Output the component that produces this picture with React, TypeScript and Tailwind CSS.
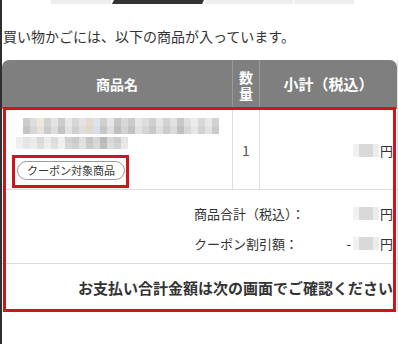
import React from "react";

const font = "font-['Noto_Sans_CJK_JP','Noto_Sans',sans-serif]";

// pixelated (mosaic) placeholder for hidden text
const Mosaic = ({ rows, h }: { rows: string[][]; h: string }) => (
  <div className="flex flex-col">
    {rows.map((row, i) => (
      <div key={i} className="flex">
        {row.map((c, j) => (
          <div key={j} className={`w-[7px] ${h}`} style={{ background: c }} />
        ))}
      </div>
    ))}
  </div>
);

const line1: string[][] = [
  ["#cdcdcd", "#dedede", "#eee7dc", "#d2d2d2", "#e3e3e3", "#cccccc", "#e8e8e8", "#d6d6d6", "#e3e3e3", "#e4d9cc", "#dde4ec", "#d0d0d0", "#e6e6e6", "#c6c6c6", "#d8d8d8", "#cacaca", "#e7e7e7", "#dcdcdc", "#d0d0d0", "#e6e6e6", "#d3d3d3", "#e2e2e2", "#c8c8c8", "#dfdfdf", "#ececec", "#d9d9d9", "#e8e8e8", "#d2d2d2"],
  ["#c4c4c4", "#d7d7d7", "#e9e2d8", "#cbcbcb", "#dddddd", "#c3c3c3", "#e2e2e2", "#cfcfcf", "#dedede", "#e1d7ca", "#d8dfe8", "#c7c7c7", "#dfdfdf", "#bfbfbf", "#d2d2d2", "#c2c2c2", "#e1e1e1", "#d5d5d5", "#c8c8c8", "#dfdfdf", "#cccccc", "#dbdbdb", "#c0c0c0", "#d8d8d8", "#e6e6e6", "#d2d2d2", "#e2e2e2", "#cbcbcb"],
];

const line2: string[][] = [
  ["#eeeeee", "#e4e4e4", "#eaeaea", "#dadada", "#ebebeb", "#dcdcdc", "#eeeeee", "#d2d2d2", "#cbcbcb", "#dedede", "#c6c6c6", "#d6d6d6", "#b9b9b9", "#d9d9d9", "#cdcdcd", "#e5e5e5"],
  ["#f1f1f1", "#e7e7e7", "#ededed", "#dedede", "#eeeeee", "#e0e0e0", "#f0f0f0", "#d7d7d7", "#d0d0d0", "#e2e2e2", "#cbcbcb", "#dadada", "#bfbfbf", "#dddddd", "#d3d3d3", "#e9e9e9"],
];

const Price = ({ minus }: { minus?: boolean }) => (
  <div className="flex items-center justify-end">
    {minus && <span className="mr-[2px] text-[13px]">-</span>}
    <div className="flex h-[13px]">
      <div className="w-[6px] bg-[#f1f1f1]" />
      <div className="w-[14px] bg-[#d9d9d9]" />
      <div className="w-[6px] bg-[#ececec]" />
    </div>
    <span className="ml-[1px] text-[13px] leading-none">円</span>
  </div>
);

export default function App() {
  return (
    <div className={`relative w-[398px] h-[344px] overflow-hidden bg-white border-l-2 border-[#2f2f2f] text-[#333] ${font}`}>
      {/* steps bar */}
      <div className="flex h-[4px] ml-[49px] gap-[1px]">
        <div className="w-[60px] bg-[#eeeeee]" />
        <div className="w-[92px] bg-[#333333] [clip-path:polygon(2px_0,100%_0,calc(100%-2px)_100%,0_100%)]" />
        <div className="w-[88px] bg-[#eeeeee]" />
        <div className="w-[60px] bg-[#eeeeee]" />
      </div>

      <p className="mt-[21px] ml-[1px] text-[14px] leading-[22px]">
        買い物かごには、以下の商品が入っています。
      </p>

      <div className="mt-[13px] w-[396px] border-r border-[#ddd]">
        {/* header */}
        <div className="grid grid-cols-[230px_28px_1fr] h-[49px] bg-[#7f7f7f] rounded-t-[7px] text-white font-bold text-[14px]">
          <div className="flex items-center justify-center">商品名</div>
          <div className="flex flex-col items-center justify-center leading-[16px] border-x border-[#999]">
            <span>数</span>
            <span>量</span>
          </div>
          <div className="flex items-center justify-center text-[15px]">小計（税込）</div>
        </div>

        {/* product row */}
        <div className="grid grid-cols-[230px_28px_1fr] h-[81px] border-b border-[#ddd]">
          <div className="pt-[9px]">
            <div className="ml-[21px]">
              <Mosaic rows={line1} h="h-[8px]" />
            </div>
            <div className="ml-[14px] mt-[3px]">
              <Mosaic rows={line2} h="h-[6px]" />
            </div>
            <div className="mt-[12px] ml-[15px] inline-flex items-center h-[19px] px-[9px] rounded-full border border-[#999] text-[11px] text-[#333]">
              クーポン対象商品
            </div>
          </div>
          <div className="flex items-center justify-center border-x border-[#ddd] text-[14px] text-[#555] pt-[2px]">1</div>
          <div className="flex items-center justify-end pr-[4px] pt-[2px]">
            <Price />
          </div>
        </div>

        {/* summary */}
        <div className="h-[74px] border-b border-[#ddd] pt-[16px] text-[13px]">
          <div className="grid grid-cols-[192px_1fr_auto] items-center h-[14px] pr-[4px]">
            <div />
            <span className="leading-none">商品合計（税込）：</span>
            <Price />
          </div>
          <div className="grid grid-cols-[192px_1fr_auto] items-center h-[14px] mt-[14px] pr-[4px]">
            <div />
            <span className="leading-none">クーポン割引額：</span>
            <Price minus />
          </div>
        </div>

        <div className="h-[48px] flex items-center justify-end pr-[4px] text-[15px] font-bold">
          お支払い合計金額は次の画面でご確認ください
        </div>
      </div>

      {/* red annotation boxes */}
      <div className="absolute left-[1px] top-[107px] w-[393px] h-[205px] border-[3px] border-[#d0141c]" />
      <div className="absolute left-[10px] top-[155px] w-[117px] h-[33px] border-[3px] border-[#d0141c]" />
    </div>
  );
}
